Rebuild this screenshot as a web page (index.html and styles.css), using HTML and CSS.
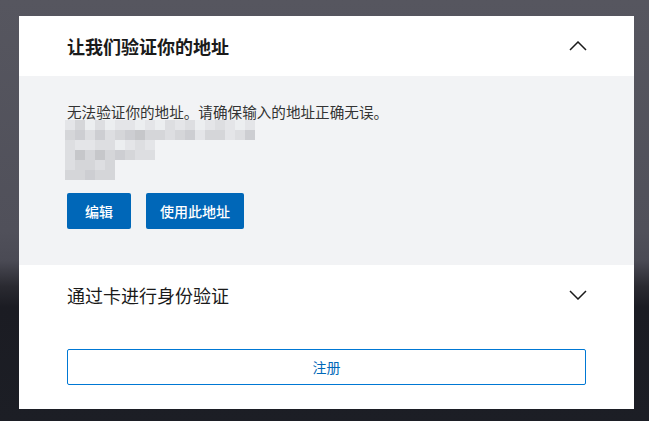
FILE: index.html
```html
<!DOCTYPE html>
<html lang="zh-CN">

<head>
    <meta charset="UTF-8">
    <meta name="viewport" content="width=device-width, initial-scale=1.0">
    <title>验证地址</title>
    <link rel="stylesheet" href="styles.css">
</head>

<body>

    <div class="card">
        <div class="section-head">
            <h2 class="title-bold">让我们验证你的地址</h2>
            <svg class="chevron" width="18" height="10" viewBox="0 0 18 10"><path d="M1 9 L9 1 L17 9" fill="none" stroke="#1a1a1a" stroke-width="1.5"/></svg>
        </div>

        <div class="verify-body">
            <p class="verify-msg">无法验证你的地址。请确保输入的地址正确无误。</p>

            <!-- blurred address -->
            <div class="mosaic">
                <div class="mrow">
                    <span class="m2"></span><span class="m4"></span><span class="m1"></span><span class="m3"></span><span class="m1"></span><span class="m2"></span><span class="m2"></span><span class="m1"></span><span class="m2"></span><span class="m1"></span><span class="m3"></span><span class="m2"></span><span class="m3"></span><span class="m1"></span><span class="m2"></span><span class="m3"></span><span class="m2"></span><span class="m1"></span><span class="m2"></span>
                </div>
                <div class="mrow">
                    <span class="m4"></span><span class="m5"></span><span class="m3"></span><span class="m5"></span><span class="m3"></span><span class="m4"></span><span class="m5"></span><span class="m6"></span><span class="m4"></span><span class="m4"></span><span class="m3"></span><span class="m4"></span><span class="m5"></span><span class="m2"></span><span class="m4"></span><span class="m4"></span><span class="m2"></span><span class="m3"></span><span class="m5"></span>
                </div>
                <div class="mrow">
                    <span class="m3"></span><span class="m2"></span><span class="m2"></span><span class="m3"></span><span class="m3"></span><span class="m1"></span><span class="m2"></span><span class="m3"></span><span class="m2"></span>
                </div>
                <div class="mrow">
                    <span class="m3"></span><span class="m6"></span><span class="m4"></span><span class="m6"></span><span class="m4"></span><span class="m5"></span><span class="m4"></span><span class="m3"></span><span class="m3"></span>
                </div>
                <div class="mrow">
                    <span class="m3"></span><span class="m4"></span><span class="m4"></span><span class="m3"></span><span class="m4"></span>
                </div>
                <div class="mrow">
                    <span class="m4"></span><span class="m4"></span><span class="m5"></span><span class="m4"></span><span class="m4"></span>
                </div>
            </div>

            <div class="btn-row">
                <button class="btn-primary">编辑</button>
                <button class="btn-primary btn-wide">使用此地址</button>
            </div>
        </div>

        <div class="section-head">
            <h2 class="title-plain">通过卡进行身份验证</h2>
            <svg class="chevron" width="18" height="10" viewBox="0 0 18 10"><path d="M1 1 L9 9 L17 1" fill="none" stroke="#1a1a1a" stroke-width="1.5"/></svg>
        </div>

        <div class="register-wrap">
            <button class="btn-outline">注册</button>
        </div>
    </div>

</body>

</html>
```

FILE: styles.css
```css
:root {
    --blue: #0067b8;
    --blue-line: #0078d4;
    --text: #1a1a1a;
    --grey-bg: #f2f3f5;
}

* {
    margin: 0;
    padding: 0;
    box-sizing: border-box;
}

body {
    font-family: "Noto Sans CJK SC", "Noto Sans", sans-serif;
    background: linear-gradient(180deg, #56565f 0%, #50505a 55%, #4a4a54 62%, #2a2a31 68%, #1b1c23 73%, #1c1e25 100%);
    color: var(--text);
    height: 421px;
    padding: 16px 15px 0 19px;
    overflow: hidden;
}

.card {
    width: 615px;
    background: #fff;
}

.section-head {
    display: flex;
    justify-content: space-between;
    align-items: center;
    height: 60px;
    padding: 0 47px 0 48px;
}

.title-bold {
    font-size: 18px;
    font-weight: 700;
    line-height: 24px;
}

.title-plain {
    font-size: 18px;
    font-weight: 400;
    line-height: 24px;
}

.chevron {
    display: block;
}

.verify-body {
    background: var(--grey-bg);
    padding: 24px 48px 36px;
}

.verify-msg {
    font-size: 14.6px;
    line-height: 20px;
    color: #333;
    padding-top: 2px;
    margin-bottom: -2px;
}

.mosaic {
    height: 60px;
    margin-left: -2px;
}

.mrow {
    display: flex;
    height: 10px;
}

.mrow span {
    width: 10px;
    height: 10px;
}

.m1 { background: #eceef0; }
.m2 { background: #e4e5e8; }
.m3 { background: #dddee1; }
.m4 { background: #d5d6d9; }
.m5 { background: #cdced2; }
.m6 { background: #c6c7ca; }

.btn-row {
    display: flex;
    gap: 15px;
    margin-top: 13px;
}

.btn-primary {
    font-family: inherit;
    font-size: 14px;
    font-weight: 500;
    color: #fff;
    background: var(--blue);
    border: none;
    border-radius: 2px;
    height: 36px;
    padding: 0 18px;
}

.btn-wide {
    padding: 0 14px;
}

.register-wrap {
    padding: 24px 48px;
}

.btn-outline {
    display: block;
    width: 519px;
    height: 36px;
    font-family: inherit;
    font-size: 14px;
    color: var(--blue);
    background: #fff;
    border: 1px solid var(--blue-line);
    border-radius: 2px;
}
```
